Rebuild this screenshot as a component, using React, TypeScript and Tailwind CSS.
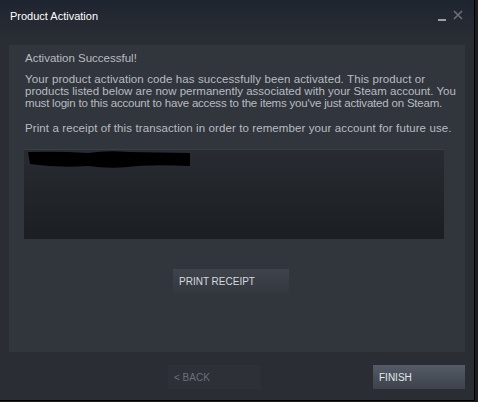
import React from "react";

export default function App() {
  return (
    <div className="w-[478px] h-[402px] bg-[#1c1e22] relative overflow-hidden" style={{ fontFamily: '"Liberation Sans", Arial, sans-serif' }}>
      <div className="w-[475px] h-[401px] border-r border-b border-black bg-[#2a2e34] flex flex-col">
        <div className="h-[45px] bg-gradient-to-b from-[#1f2530] to-[#2a2e34] flex items-start">
          <div className="pl-[10px] pt-[10px] text-[11px] text-white leading-[13px] flex-1">Product Activation</div>
          <div className="flex items-start pt-[9px] pr-[11px] gap-[7px]">
            <div className="w-[8px] h-[2px] bg-[#9aa0a8] mt-[10px]" />
            <svg width="10" height="10" viewBox="0 0 10 10" className="mt-[1px]">
              <path d="M1 1 L9 9 M9 1 L1 9" stroke="#6b7079" strokeWidth="1.6" />
            </svg>
          </div>
        </div>
        <div className="mx-[9px] h-[307px] bg-[#31353c] flex flex-col">
          <div className="pl-[16px] pt-[7px] text-[11.5px] leading-[12px] text-[#b8bcc2] whitespace-nowrap">
            <p>Activation Successful!</p>
            <p className="mt-[9px]">
              <span className="block tracking-[0.1px]">Your product activation code has successfully been activated. This product or</span>
              <span className="block">products listed below are now permanently associated with your Steam account. You</span>
              <span className="block tracking-[-0.2px]">must login to this account to have access to the items you've just activated on Steam.</span>
            </p>
            <p className="mt-[13px] tracking-[0.1px]">Print a receipt of this transaction in order to remember your account for future use.</p>
          </div>
          <div className="ml-[15px] mr-[21px] mt-[15px] h-[90px] border-t border-[#3a3f46] bg-gradient-to-b from-[#282c32] to-[#1b1e22] relative">
            <svg width="166" height="20" viewBox="0 0 166 20" className="absolute left-[4px] top-0">
              <path d="M0 2 Q 30 1 60 3 Q 80 0 100 2 L 162 3 L 162 16 Q 120 14 100 17 Q 80 19 60 16 Q 30 18 2 14 Z" fill="#000" />
            </svg>
          </div>
          <div className="flex justify-center mt-[30px] pr-[12px]">
            <div className="w-[116px] h-[24px] bg-gradient-to-b from-[#3f444c] to-[#33373e] text-[10px] text-[#d6dade] pl-[6px] flex items-center">PRINT RECEIPT</div>
          </div>
        </div>
        <div className="flex mt-[13px] ml-[168px] gap-[112px]">
          <div className="w-[93px] h-[24px] bg-[#2d3137] text-[10px] text-[#6a7079] pl-[6px] flex items-center">&lt; BACK</div>
          <div className="w-[92px] h-[24px] bg-gradient-to-b from-[#555c67] to-[#3d424b] text-[10px] text-[#e4e7ea] pl-[6px] flex items-center">FINISH</div>
        </div>
      </div>
    </div>
  );
}
